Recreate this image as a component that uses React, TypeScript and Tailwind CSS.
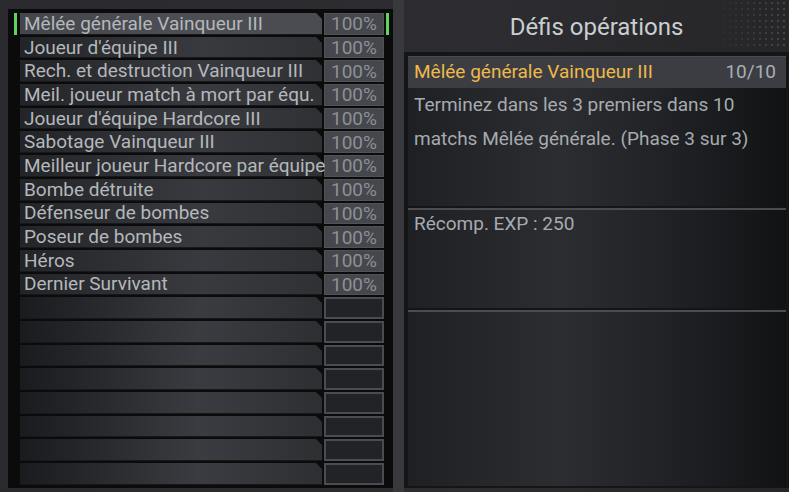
import React from 'react'

const ROWS = [
  'Mêlée générale Vainqueur III',
  "Joueur d'équipe III",
  'Rech. et destruction Vainqueur III',
  'Meil. joueur match à mort par équ.',
  "Joueur d'équipe Hardcore III",
  'Sabotage Vainqueur III',
  'Meilleur joueur Hardcore par équipe',
  'Bombe détruite',
  'Défenseur de bombes',
  'Poseur de bombes',
  'Héros',
  'Dernier Survivant',
]

const TOTAL = 20
const FONT = 'font-[Roboto,"DejaVu_Sans",sans-serif]'

function Row({ label, selected }: { label?: string; selected?: boolean }) {
  const rowBg = selected
    ? 'bg-[linear-gradient(90deg,#44464c_0%,#4c4e54_55%,#4a4c52_100%)]'
    : label
      ? 'bg-[linear-gradient(90deg,#232428_0%,#393a3f_60%,#303135_100%)]'
      : 'bg-[linear-gradient(90deg,#1a1b1e_0%,#3b3c41_60%,#2e2f33_100%)]'
  return (
    <div className="flex h-[21.7px] items-stretch">
      <div className={`w-[3px] ${selected ? 'bg-[#5fd35f]' : ''}`} />
      <div
        className={`relative ml-[3px] w-[302px] shrink-0 ${rowBg} border-b border-[#17181a] pl-[4px] flex items-center whitespace-nowrap text-[19px] leading-none text-[#b4b8bb]`}
      >
        {/* coin coupé */}
        <span className="absolute right-0 top-0 w-0 h-0 border-t-[6px] border-l-[6px] border-t-[#0b0b0c] border-l-transparent" />
        <span className="relative z-10">{label}</span>
      </div>
      {label ? (
        <div className="ml-[2px] w-[60px] shrink-0 bg-[#45474d] border border-[#505258] flex items-center justify-center text-[19px] leading-none text-[#8c9096]">
          100%
        </div>
      ) : (
        <div className="ml-[2px] w-[60px] shrink-0 bg-[#222327] border-2 border-[#4a4c52]" />
      )}
      <div className={`ml-[2px] w-[3px] ${selected ? 'bg-[#5fd35f]' : ''}`} />
    </div>
  )
}

export default function App() {
  const rows = Array.from({ length: TOTAL }, (_, i) => ROWS[i])
  return (
    <div className={`relative w-[789px] h-[492px] overflow-hidden bg-[linear-gradient(90deg,#2a2a2e_0%,#2d2d31_60%,#262629_100%)] ${FONT}`}>
      <div className="absolute right-0 top-0 w-[80px] h-[50px] bg-[radial-gradient(circle,#47474c_1px,transparent_1.3px)] bg-[length:6px_6px] [mask-image:linear-gradient(to_left,black,transparent)]" />
      <div className="flex h-full">
        {/* liste */}
        <div className="pl-[8px] pt-[9px] pb-[4px]">
          <div className="w-[385px] h-[479px] bg-[#0b0b0c] pl-[6px] pt-[4px] flex flex-col gap-[2px]">
            {rows.map((r, i) => (
              <Row key={i} label={r} selected={i === 0} />
            ))}
          </div>
        </div>
        <div className="w-[11px] h-full bg-[#39393d]" />
        {/* détails */}
        <div className="flex-1 flex flex-col">
          <div className="h-[52px] flex items-center justify-center text-[24px] text-[#c9ced1] pt-[2px]">
            Défis opérations
          </div>
          <div className="w-[385px] h-[436px] bg-[#141517] pl-[4px] pt-[4px] pb-[2px] pr-[3px]">
            <div className="h-full flex flex-col bg-[linear-gradient(90deg,#1f2023_0%,#2c2d31_40%,#1e1f22_75%,#111214_100%)]">
              <div className="h-[32px] shrink-0 bg-[#3b3d43] border-t border-[#4a4c52] flex items-center justify-between pl-[6px] pr-[10px] text-[19px]">
                <span className="text-[#efb94a]">Mêlée générale Vainqueur III</span>
                <span className="text-[#a9adb1]">10/10</span>
              </div>
              <div className="h-[118px] shrink-0 pl-[6px] text-[19px] leading-[34px] text-[#a6abaf]">
                Terminez dans les 3 premiers dans 10
                <br />
                matchs Mêlée générale. (Phase 3 sur 3)
              </div>
              <div className="h-[4px] shrink-0 border-t-2 border-[#141517] bg-[#4a4c52]" />
              <div className="h-[98px] shrink-0 pl-[6px] text-[19px] leading-[28px] text-[#a6abaf]">
                Récomp. EXP : 250
              </div>
              <div className="h-[4px] shrink-0 border-t-2 border-[#141517] bg-[#4a4c52]" />
            </div>
          </div>
        </div>
      </div>
    </div>
  )
}
